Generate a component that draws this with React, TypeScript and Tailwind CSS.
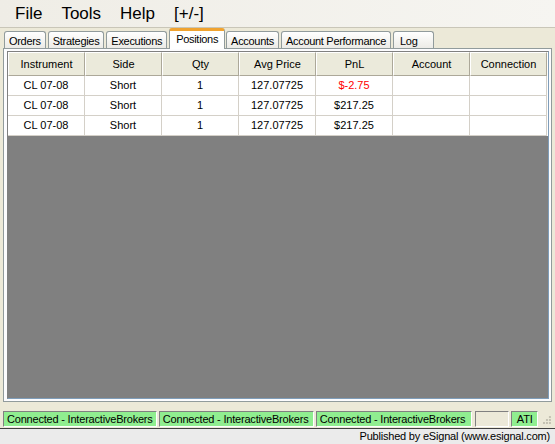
import React from 'react';

const tabs = ['Orders', 'Strategies', 'Executions', 'Positions', 'Accounts', 'Account Performance', 'Log'];
const columns = ['Instrument', 'Side', 'Qty', 'Avg Price', 'PnL', 'Account', 'Connection'];

const rows = [
  { instrument: 'CL 07-08', side: 'Short', qty: '1', avg: '127.07725', pnl: '$-2.75', loss: true },
  { instrument: 'CL 07-08', side: 'Short', qty: '1', avg: '127.07725', pnl: '$217.25', loss: false },
  { instrument: 'CL 07-08', side: 'Short', qty: '1', avg: '127.07725', pnl: '$217.25', loss: false },
];

const font = { fontFamily: '"Liberation Sans", Arial, sans-serif' };

const panel = 'h-[16px] flex items-center whitespace-nowrap overflow-hidden bg-[#90ee90] border border-[#808080] border-r-white border-b-white';

export default function App() {
  return (
    <div className="w-[555px] h-[444px] overflow-hidden flex flex-col bg-[#ece9d8] text-black" style={font}>
      {/* Menu */}
      <div className="h-[28px] shrink-0 flex items-center gap-[19px] px-[15px] bg-gradient-to-r from-[#efede6] to-[#f6f5f1] border-b border-[#c9c6b8] text-[17px] leading-none">
        <span>File</span>
        <span>Tools</span>
        <span>Help</span>
        <span>[+/-]</span>
      </div>

      {/* Tabs */}
      <div className="flex-1 flex flex-col px-[3px] pt-[1px] pb-[3px] min-h-0">
        <div className="flex items-end h-[19px] pl-[1px] relative z-10">
          {tabs.map((t) => {
            const active = t === 'Positions';
            return active ? (
              <div
                key={t}
                className="h-[21px] -mb-[1px] mr-[1px] px-[6px] flex items-start pt-[3px] bg-white border-x border-[#919b9c] border-t-[3px] border-t-[#f0a330] rounded-t-[3px] text-[11px] tracking-[-0.3px] leading-none"
              >
                {t}
              </div>
            ) : (
              <div
                key={t}
                className={`h-[17px] mr-[2px] px-[4px] flex items-center bg-gradient-to-b from-white to-[#ecebe6] border border-b-0 border-[#919b9c] rounded-t-[3px] text-[11px] tracking-[-0.3px] leading-none pt-[2px] ${t === 'Log' ? 'w-[41px] pl-[6px]' : ''}`}
              >
                {t}
              </div>
            );
          })}
        </div>
        <div className="flex-1 flex flex-col border border-[#919b9c] bg-[#fcfcfe] p-[2px] min-h-0">
          <div className="flex-1 flex flex-col border border-[#7f9db9] border-l-[#808080] border-t-[#808080] bg-[#808080] min-h-0 ml-[1px]">
            <div className="grid grid-cols-[77px_77px_77px_77px_77px_77px_77px] bg-white">
              {columns.map((c) => (
                <div
                  key={c}
                  className="h-[24px] flex items-center justify-center bg-[#ebeadb] border-t border-l border-white border-r border-b border-r-[#aca899] border-b-[#aca899] text-[11px]"
                >
                  {c}
                </div>
              ))}
              {rows.map((r, i) => (
                <React.Fragment key={i}>
                  <div className="h-[20px] flex items-center justify-center border-r border-b border-[#d4d0c8] text-[11px]">{r.instrument}</div>
                  <div className="h-[20px] flex items-center justify-center border-r border-b border-[#d4d0c8] text-[11px]">{r.side}</div>
                  <div className="h-[20px] flex items-center justify-center border-r border-b border-[#d4d0c8] text-[11px]">{r.qty}</div>
                  <div className="h-[20px] flex items-center justify-center border-r border-b border-[#d4d0c8] text-[11px]">{r.avg}</div>
                  <div className={`h-[20px] flex items-center justify-center border-r border-b border-[#d4d0c8] text-[11px] ${r.loss ? 'text-[#ff0000]' : ''}`}>{r.pnl}</div>
                  <div className="h-[20px] border-r border-b border-[#d4d0c8]" />
                  <div className="h-[20px] border-r border-b border-[#d4d0c8]" />
                </React.Fragment>
              ))}
            </div>
          </div>
        </div>
      </div>

      {/* Status bar */}
      <div className="h-[24px] shrink-0 flex items-end pb-[1px] gap-[2px] px-[3px] border-b border-[#404040] text-[11px] tracking-[-0.2px]">
        <div className={`${panel} w-[155px] pl-[3px]`}>Connected - InteractiveBrokers</div>
        <div className={`${panel} w-[156px] pl-[3px]`}>Connected - InteractiveBrokers</div>
        <div className={`${panel} w-[157px] pl-[3px]`}>Connected - InteractiveBrokers</div>
        <div className="w-[35px] h-[16px] ml-[1px] bg-[#ece9d8] border border-[#808080] border-r-white border-b-white" />
        <div className={`${panel} w-[27px] justify-center`}>ATI</div>
        <svg width="12" height="12" viewBox="0 0 12 12" className="mb-[1px]">
          {[[9, 1], [6, 4], [9, 4], [3, 7], [6, 7], [9, 7]].map(([x, y], i) => (
            <rect key={i} x={x} y={y + 1} width="2" height="2" fill="#c4c1b2" />
          ))}
        </svg>
      </div>

      {/* Footer */}
      <div className="h-[15px] shrink-0 flex items-center justify-end pr-[5px] bg-[#ebebeb] text-[11px] tracking-[-0.2px]">
        Published by eSignal (www.esignal.com)
      </div>
    </div>
  );
}
